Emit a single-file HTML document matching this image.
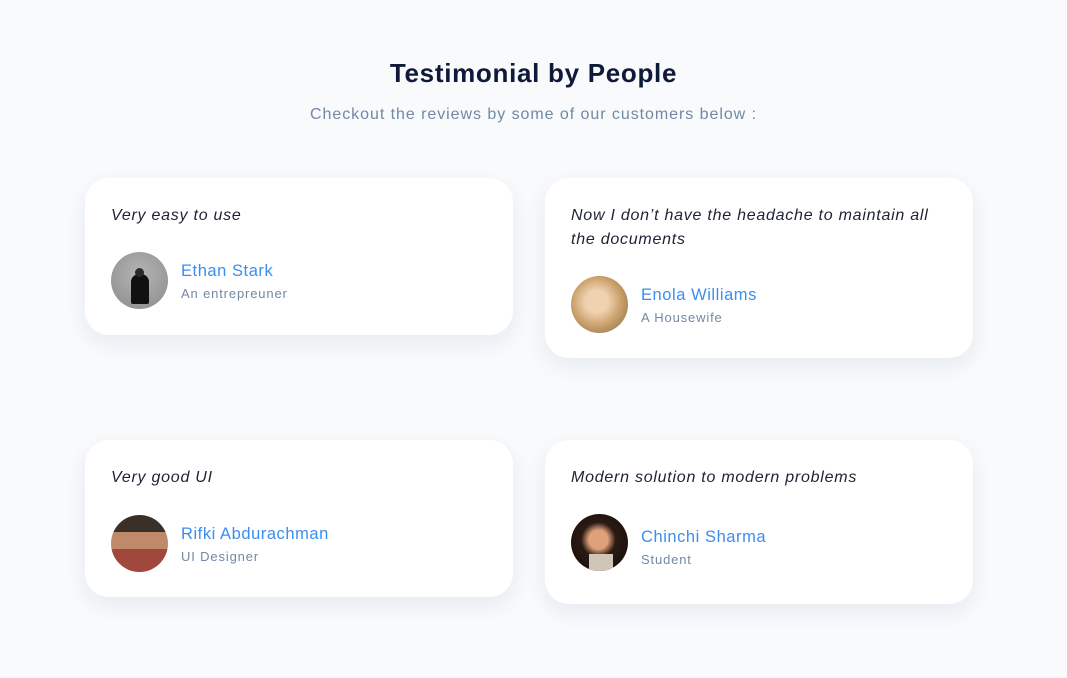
<!DOCTYPE html>
<html><head><meta charset="utf-8"><style>
*{margin:0;padding:0;box-sizing:border-box}
body{width:1067px;height:678px;background:#f8fafc;font-family:"Liberation Sans",sans-serif;position:relative;overflow:hidden}
h1{position:absolute;top:58px;left:0;width:1067px;text-align:center;font-size:26px;font-weight:bold;color:#0f1a3a;letter-spacing:0.7px}
.sub{position:absolute;top:106px;left:0;width:1067px;text-align:center;font-size:16px;color:#7388a6;letter-spacing:0.95px}
.card{position:absolute;width:428px;background:#fff;border-radius:24px;box-shadow:0 8px 22px rgba(30,50,90,0.08)}
.q{position:absolute;left:26px;top:26px;right:26px;font-style:italic;font-size:16px;line-height:24px;color:#1e2235;letter-spacing:0.75px}
.av{position:absolute;left:26px;width:57px;height:57px;border-radius:50%;overflow:hidden}
.nm{position:absolute;left:96px;font-size:16.5px;color:#3b8df0;letter-spacing:0.55px}
.rl{position:absolute;left:96px;font-size:13px;color:#7388a6;letter-spacing:0.85px}
</style></head><body>
<h1>Testimonial by People</h1>
<div class="sub">Checkout the reviews by some of our customers below :</div>

<div class="card" style="left:85px;top:178px;height:157px">
<div class="q">Very easy to use</div>
<div class="av" style="top:74px;background:radial-gradient(circle at 50% 40%,#b5b5b5,#8a8a8a)"><div style="position:absolute;left:20px;top:22px;width:18px;height:30px;background:#111;border-radius:8px 8px 2px 2px"></div><div style="position:absolute;left:24px;top:16px;width:9px;height:9px;background:#2a2a2a;border-radius:50%"></div></div>
<div class="nm" style="top:84px">Ethan Stark</div>
<div class="rl" style="top:108px">An entrepreuner</div>
</div>

<div class="card" style="left:545px;top:178px;height:180px">
<div class="q" style="right:20px">Now I don’t have the headache to maintain all the documents</div>
<div class="av" style="top:98px;background:radial-gradient(circle at 45% 45%,#f0d2b0 25%,#c9a06a 55%,#7a6a4a)"></div>
<div class="nm" style="top:108px">Enola Williams</div>
<div class="rl" style="top:132px">A Housewife</div>
</div>

<div class="card" style="left:85px;top:440px;height:157px">
<div class="q">Very good UI</div>
<div class="av" style="top:75px;background:linear-gradient(#3a3028 0 30%,#c08a6a 30% 60%,#a0483c 60%)"></div>
<div class="nm" style="top:85px">Rifki Abdurachman</div>
<div class="rl" style="top:109px">UI Designer</div>
</div>

<div class="card" style="left:545px;top:440px;height:164px">
<div class="q">Modern solution to modern problems</div>
<div class="av" style="top:74px;background:radial-gradient(circle at 48% 45%,#e0a07a 22%,#2a1a14 40%,#120a08)"><div style="position:absolute;left:18px;top:40px;width:24px;height:17px;background:#cfc6b8"></div></div>
<div class="nm" style="top:88px">Chinchi Sharma</div>
<div class="rl" style="top:112px">Student</div>
</div>
</body></html>
